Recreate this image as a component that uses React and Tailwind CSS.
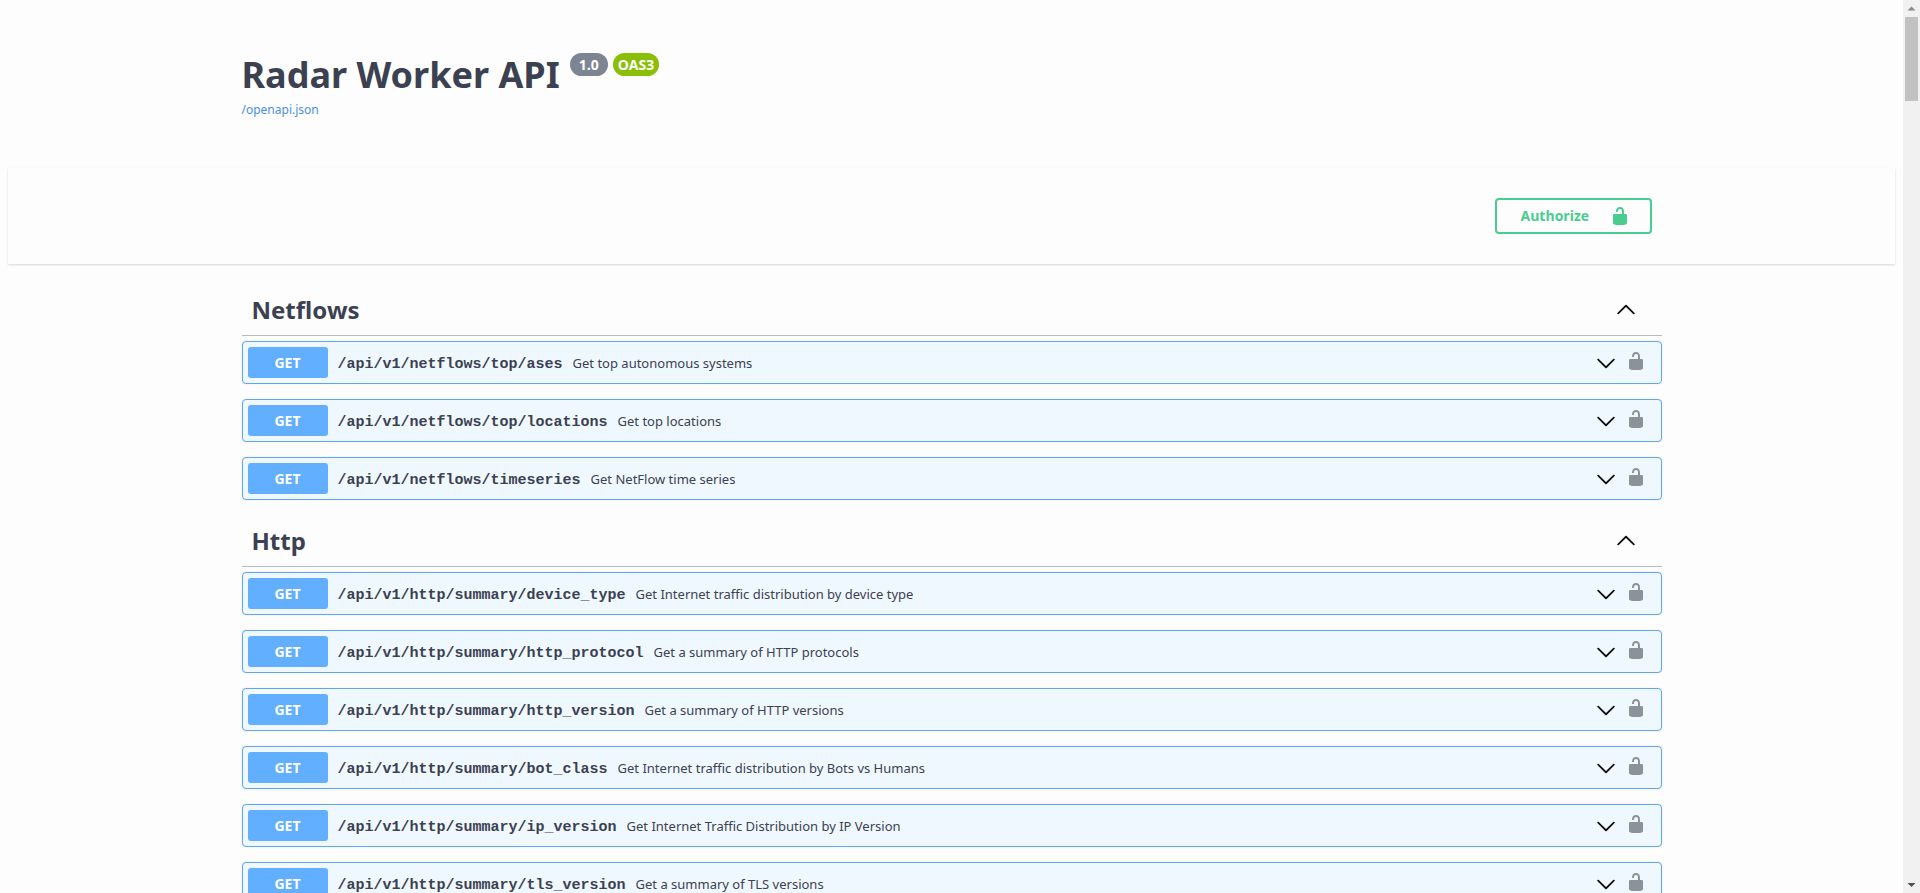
import React from "react";

const sections = [
  {
    name: "Netflows",
    operations: [
      ["/api/v1/netflows/top/ases", "Get top autonomous systems"],
      ["/api/v1/netflows/top/locations", "Get top locations"],
      ["/api/v1/netflows/timeseries", "Get NetFlow time series"],
    ],
  },
  {
    name: "Http",
    operations: [
      ["/api/v1/http/summary/device_type", "Get Internet traffic distribution by device type"],
      ["/api/v1/http/summary/http_protocol", "Get a summary of HTTP protocols"],
      ["/api/v1/http/summary/http_version", "Get a summary of HTTP versions"],
      ["/api/v1/http/summary/bot_class", "Get Internet traffic distribution by Bots vs Humans"],
      ["/api/v1/http/summary/ip_version", "Get Internet Traffic Distribution by IP Version"],
      ["/api/v1/http/summary/tls_version", "Get a summary of TLS versions"],
    ],
  },
];

function UnlockIcon({ className }) {
  return (
    <svg viewBox="0 0 20 20" className={className} fill="currentColor" aria-hidden="true">
      <path d="M15.8 8H14V5.6C14 2.703 12.665 1 10 1 7.334 1 6 2.703 6 5.6V6h2v-.801C8 3.754 8.797 3 10 3c1.203 0 2 .754 2 2.199V8H4c-.553 0-1 .646-1 1.199V17c0 .549.428 1.139.951 1.307l1.197.387C5.672 18.861 6.55 19 7.1 19h5.8c.549 0 1.428-.139 1.951-.307l1.196-.387c.524-.167.953-.757.953-1.306V9.199C17 8.646 16.352 8 15.8 8z" />
    </svg>
  );
}

function Chevron({ className }) {
  return (
    <svg viewBox="0 0 20 20" className={className} fill="currentColor" stroke="currentColor" strokeWidth=".3" aria-hidden="true">
      <path d="M17.418 6.109c.272-.268.709-.268.979 0s.271.701 0 .969l-7.908 7.83c-.27.268-.707.268-.979 0l-7.908-7.83c-.27-.268-.27-.701 0-.969.271-.268.709-.268.979 0L10 13.25l7.418-7.141z" />
    </svg>
  );
}

function Operation({ path, summary }) {
  return (
    <div className="flex items-center rounded border border-[#61a5ec] bg-[#f0f8ff] p-[5px] shadow-[0_0_2px_rgba(0,0,0,0.1)]">
      <button type="button" className="flex min-w-0 flex-1 items-center text-left">
        <span className="w-20 shrink-0 rounded-[3px] bg-[#61affe] text-center text-sm leading-[31px] font-bold text-white">
          GET
        </span>
        <span className="flex min-w-0 items-baseline pt-[2px] leading-5">
          <span className="px-[10px] font-['Liberation_Mono',monospace] text-[15px] font-bold whitespace-nowrap">
            {path}
          </span>
          <span className="truncate font-['Noto_Sans',sans-serif] text-[13px]">{summary}</span>
        </span>
      </button>
      <button type="button" aria-label={"Expand " + path} className="shrink-0 px-[10px]">
        <Chevron className="size-5 text-black" />
      </button>
      <button type="button" aria-label={"Authorize " + path} className="mr-[10px] shrink-0 pb-1">
        <UnlockIcon className="size-5 text-[#8c9299]" />
      </button>
    </div>
  );
}

function Section({ name, operations }) {
  return (
    <section>
      <h3 className="mb-[5px] border-b border-[#b9bbc2]">
        <button type="button" className="flex h-[51px] w-full items-center pr-[26px] pl-[10px] text-left">
          <span className="flex-1 font-['Noto_Sans',sans-serif] text-2xl font-bold">{name}</span>
          <Chevron className="size-5 rotate-180 text-black" />
        </button>
      </h3>
      <div className="flex flex-col gap-[15px] pb-[15px]">
        {operations.map(([path, summary]) => (
          <Operation key={path} path={path} summary={summary} />
        ))}
      </div>
    </section>
  );
}

function Scrollbar() {
  return (
    <div className="flex w-[17px] shrink-0 flex-col items-center bg-[#f1f1f1]" aria-hidden="true">
      <svg viewBox="0 0 17 17" className="size-[17px]" fill="#8a8a8a">
        <path d="M8.500 6.500l4 4h-8z" />
      </svg>
      <div className="h-[84px] w-[13px] bg-[#c1c1c1]" />
      <div className="flex-1" />
      <svg viewBox="0 0 17 17" className="size-[17px]" fill="#505050">
        <path d="M8.500 11l-4-4h8z" />
      </svg>
    </div>
  );
}

export default function App() {
  return (
    <div className="flex h-screen overflow-hidden bg-[#fdfdfd] font-['Open_Sans','Noto_Sans',sans-serif] text-[#3b4151]">
      <main className="min-w-0 flex-1 overflow-hidden px-2">
        <header className="mx-auto h-[168px] max-w-[1460px] px-5 pt-[50px]">
          <div className="flex items-start gap-[5px]">
            <h1 className="pr-[5px] font-['Noto_Sans',sans-serif] text-4xl leading-[50px] font-bold whitespace-nowrap">
              Radar Worker API
            </h1>
            <span className="mt-[3px] rounded-full bg-[#7d8492] px-[9px] text-sm leading-[23px] font-bold text-white">
              1.0
            </span>
            <span className="mt-[3px] rounded-full bg-[#89bf04] px-[5px] text-sm leading-[23px] font-bold text-white">
              OAS3
            </span>
          </div>
          <a
            href="/openapi.json"
            className="block w-fit font-['Noto_Sans',sans-serif] text-xs leading-5 text-[#4990e2]"
          >
            /openapi.json
          </a>
        </header>
        <div className="mb-5 bg-[#fdfdfd] py-[30px] shadow-[0_1px_2px_0_rgba(0,0,0,0.15)]">
          <div className="mx-auto flex max-w-[1460px] justify-end px-[30px]">
            <button
              type="button"
              className="flex h-9 w-[157px] items-center justify-between rounded border-2 border-[#49cc90] pr-5 pl-6 text-sm font-bold text-[#49cc90]"
            >
              Authorize
              <UnlockIcon className="size-5" />
            </button>
          </div>
        </div>
        <div className="mx-auto max-w-[1460px] px-5">
          {sections.map((section) => (
            <Section key={section.name} {...section} />
          ))}
        </div>
      </main>
      <Scrollbar />
    </div>
  );
}
